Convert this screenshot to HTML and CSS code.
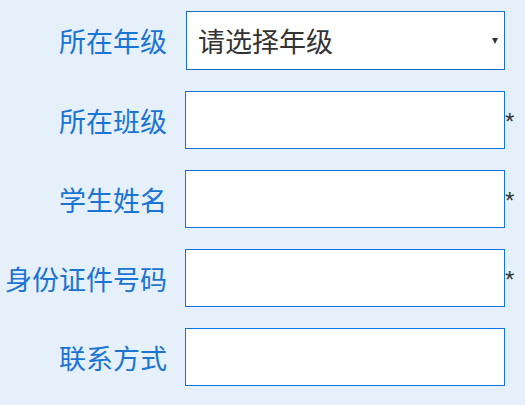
FILE: index.html
```html
<!DOCTYPE html>
<html lang="zh-CN">
<head>
<meta charset="utf-8">
<link rel="stylesheet" href="styles.css">
</head>
<body>
<form class="form">
  <div class="row">
    <label class="label">所在年级</label>
    <div class="select-wrap">
      <select class="select">
        <option>请选择年级</option>
      </select>
      <span class="arrow"></span>
    </div>
  </div>
  <div class="row">
    <label class="label">所在班级</label>
    <input class="input" type="text">
    <span class="req">*</span>
  </div>
  <div class="row">
    <label class="label">学生姓名</label>
    <input class="input" type="text">
    <span class="req">*</span>
  </div>
  <div class="row">
    <label class="label">身份证件号码</label>
    <input class="input" type="text">
    <span class="req">*</span>
  </div>
  <div class="row">
    <label class="label">联系方式</label>
    <input class="input" type="text">
  </div>
</form>
</body>
</html>
```

FILE: styles.css
```css
html, body {
  margin: 0;
  padding: 0;
  background: #e6f0fa;
}
body {
  width: 525px;
  height: 405px;
  overflow: hidden;
  font-family: "Noto Sans CJK SC", "Noto Sans", sans-serif;
}
.form {
  display: flex;
  flex-direction: column;
  gap: 21px;
  padding-top: 11px;
}
.row {
  display: flex;
  align-items: center;
  gap: 18px;
  height: 58px;
}
.row:first-child {
  height: 59px;
}
.label {
  width: 167px;
  flex: none;
  text-align: right;
  font-size: 27px;
  line-height: 1;
  color: #1a74d4;
  white-space: nowrap;
}
.select-wrap {
  position: relative;
  margin-left: 1px;
  width: 319px;
  height: 59px;
}
.select {
  appearance: none;
  -webkit-appearance: none;
  box-sizing: border-box;
  width: 100%;
  height: 100%;
  margin: 0;
  border: 1px solid #1a6fc7;
  border-radius: 0;
  background: #ffffff;
  padding: 0 0 0 11px;
  font-family: "Noto Sans CJK SC", sans-serif;
  font-size: 27px;
  color: #333333;
  outline: none;
}
.arrow {
  position: absolute;
  right: 7px;
  top: 27px;
  width: 0;
  height: 0;
  border-left: 3px solid transparent;
  border-right: 3px solid transparent;
  border-top: 6px solid #333333;
}
.input {
  box-sizing: border-box;
  width: 320px;
  height: 58px;
  margin: 0;
  border: 1px solid #0f74dd;
  border-radius: 0;
  background: #ffffff;
  padding: 0 10px;
  outline: none;
  flex: none;
}
.req {
  margin-left: -18px;
  font-family: "Liberation Sans", Arial, sans-serif;
  font-size: 24px;
  color: #333333;
  line-height: 1;
  position: relative;
  top: 2px;
}
```
